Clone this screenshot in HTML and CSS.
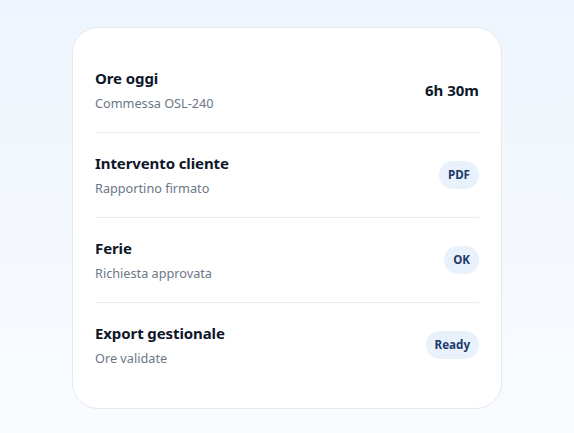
FILE: index.html
```html
<!DOCTYPE html>
<html lang="it">
<head>
<meta charset="utf-8">
<title>Riepilogo giornata</title>
<link rel="stylesheet" href="styles.css">
</head>
<body>
<main class="page">
  <section class="card">
    <div class="row">
      <div class="info">
        <div class="title">Ore oggi</div>
        <div class="sub">Commessa OSL-240</div>
      </div>
      <div class="value">6h 30m</div>
    </div>
    <div class="row">
      <div class="info">
        <div class="title">Intervento cliente</div>
        <div class="sub">Rapportino firmato</div>
      </div>
      <span class="badge">PDF</span>
    </div>
    <div class="row">
      <div class="info">
        <div class="title">Ferie</div>
        <div class="sub">Richiesta approvata</div>
      </div>
      <span class="badge">OK</span>
    </div>
    <div class="row">
      <div class="info">
        <div class="title">Export gestionale</div>
        <div class="sub">Ore validate</div>
      </div>
      <span class="badge">Ready</span>
    </div>
  </section>
</main>
</body>
</html>
```
FILE: styles.css
```css
html, body {
  margin: 0;
  height: 100%;
}

body {
  font-family: "Noto Sans", "Open Sans", sans-serif;
  background: linear-gradient(180deg, #eef5fd 0%, #f9fbfe 100%);
  color: #0f172a;
}

.page {
  display: flex;
  justify-content: center;
  padding-top: 27px;
}

.card {
  width: 430px;
  box-sizing: border-box;
  background: #ffffff;
  border: 1px solid #e3e9f1;
  border-radius: 26px;
  padding: 20px 22px 21px;
}

.row {
  display: flex;
  align-items: center;
  justify-content: space-between;
  height: 84px;
  border-bottom: 1px solid #e9edf2;
}

.row:last-child {
  border-bottom: none;
}

.info {
  display: flex;
  flex-direction: column;
  gap: 6px;
}

.title {
  font-size: 15px;
  font-weight: 700;
  line-height: 20px;
  letter-spacing: -0.1px;
  color: #0f172a;
}

.sub {
  font-size: 12.7px;
  line-height: 18px;
  color: #6b7787;
}

.value {
  font-size: 15px;
  font-weight: 700;
  color: #0f172a;
}

.badge {
  font-size: 11.6px;
  font-weight: 700;
  line-height: 28px;
  padding: 0 9px;
  border-radius: 999px;
  background: #e8f1fc;
  color: #1e3a6b;
}
```
